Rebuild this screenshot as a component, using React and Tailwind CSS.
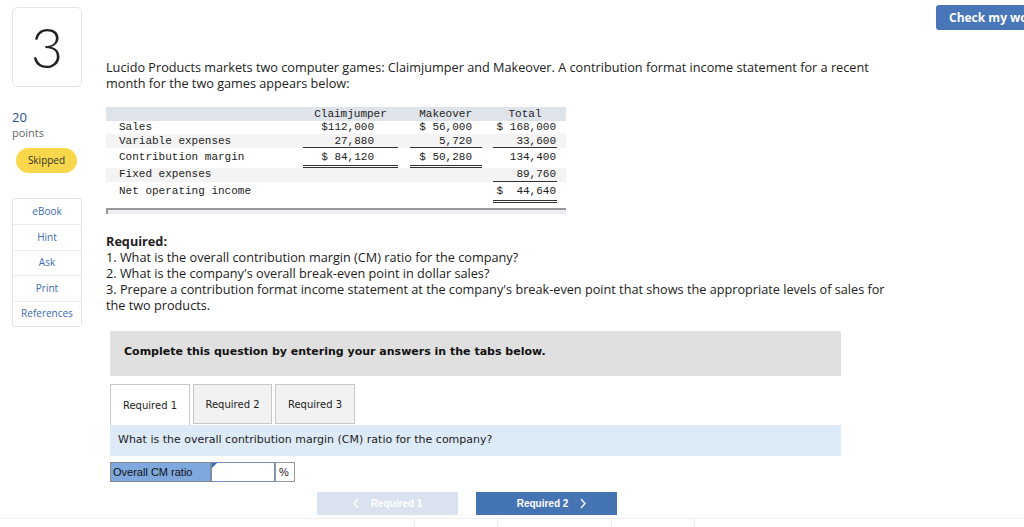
import React from "react";

const sideLinks = ["eBook", "Hint", "Ask", "Print", "References"];

const rows = [
  { label: "Sales", a: "$112,000", b: "$ 56,000", t: "$ 168,000", h: "h-[13px]", pt: "pt-[0px]", bg: "" },
  { label: "Variable expenses", a: "27,880", b: "5,720", t: "33,600", h: "h-[14px]", pt: "pt-[1px]", bg: "bg-[#f4f4f4]", lineA: "single", lineT: "single" },
  { label: "Contribution margin", a: "$ 84,120", b: "$ 50,280", t: "134,400", h: "h-[20px]", pt: "pt-[3px]", bg: "", lineA: "double" },
  { label: "Fixed expenses", a: "", b: "", t: "89,760", h: "h-[14px]", pt: "pt-[0px]", bg: "bg-[#f4f4f4]", lineT: "single" },
  { label: "Net operating income", a: "", b: "", t: "$  44,640", h: "h-[21px]", pt: "pt-[3px]", bg: "", lineT: "double" },
];

const lineCls = (kind) =>
  kind === "single"
    ? "border-b border-[#333]"
    : kind === "double"
    ? "border-b-[3px] border-double border-[#333]"
    : "";

const Chevron = ({ dir }) => (
  <svg width="6" height="11" viewBox="0 0 6 11" fill="none" stroke="currentColor" strokeWidth="1.3">
    {dir === "left" ? <path d="M5 1 L1 5.5 L5 10" /> : <path d="M1 1 L5 5.5 L1 10" />}
  </svg>
);

const Statement = () => (
  <div className="w-[460px] font-['Liberation_Mono',monospace] text-[11px] text-[#222]">
    <div className="flex h-[14px] bg-[#dfe3ea] items-end leading-[13px]">
      <div className="w-[197px]" />
      <div className="w-[95px] text-center">Claimjumper</div>
      <div className="w-[12px]" />
      <div className="w-[72px] text-right pr-[10px]">Makeover</div>
      <div className="w-[11px]" />
      <div className="w-[64px] text-center">Total</div>
    </div>
    {rows.map((r) => (
      <div key={r.label} className={`flex ${r.h} ${r.bg} leading-[12px]`}>
        <div className={`w-[197px] pl-[13px] ${r.pt}`}>{r.label}</div>
        <div className={`w-[95px] text-right pr-[24px] ${r.pt} ${lineCls(r.lineA)}`}>{r.a}</div>
        <div className="w-[12px]" />
        <div className={`w-[72px] text-right pr-[10px] ${r.pt} ${lineCls(r.lineA)}`}>{r.b}</div>
        <div className="w-[11px]" />
        <div className={`w-[64px] text-right whitespace-pre pr-[1px] ${r.pt} ${lineCls(r.lineT)}`}>{r.t}</div>
      </div>
    ))}
    <div className="mt-[5px] h-[6px] border-t-2 border-l-2 border-[#999] bg-[#eceef1]" />
  </div>
);

export default function App() {
  return (
    <div className="relative w-[1024px] h-[527px] overflow-hidden bg-white font-['Open_Sans',sans-serif] text-[#222]">
      <div className="flex">
        {/* left rail */}
        <div className="w-[94px] shrink-0 pl-[12px] pt-[7px]">
          <div className="w-[70px] h-[80px] border border-[#e4e4e4] rounded-[5px] flex items-center justify-center font-['Lato',sans-serif] text-[56px] font-light text-[#222] leading-none">
            3
          </div>
          <div className="mt-[23px] text-[13px] leading-[15px] text-[#1d4f91]">20</div>
          <div className="text-[11px] leading-[15px] text-[#666]">points</div>
          <div className="ml-[4px] mt-[8px] w-[61px] h-[25px] rounded-full bg-[#f8d84a] flex items-center justify-center text-[10px] text-[#333]">
            Skipped
          </div>
          <div className="mt-[25px] w-[70px] border border-[#e4e4e4] rounded-[3px]">
            {sideLinks.map((l, i) => (
              <div
                key={l}
                className={`h-[25.4px] flex items-center justify-center text-[10px] text-[#3b6cb3] ${i ? "border-t border-[#ececec]" : ""}`}
              >
                {l}
              </div>
            ))}
          </div>
        </div>

        {/* main */}
        <div className="flex-1 pl-[12px]">
          <div className="flex justify-end h-[59px] pt-[5px]">
            <button className="h-[25px] w-[110px] mr-[-22px] rounded-[3px] bg-[#4876b9] text-left pl-[13px] text-[12px] font-bold text-white whitespace-nowrap overflow-hidden">
              Check my work
            </button>
          </div>

          <p className="w-[794px] text-[12.7px] leading-[16px]">
            Lucido Products markets two computer games: Claimjumper and Makeover. A contribution format income statement
            for a recent month for the two games appears below:
          </p>

          <div className="mt-[16px]">
            <Statement />
          </div>

          <div className="mt-[19px] w-[794px] text-[12.7px] leading-[16px]">
            <div className="font-bold">Required:</div>
            <div>1. What is the overall contribution margin (CM) ratio for the company?</div>
            <div>2. What is the company's overall break-even point in dollar sales?</div>
            <div>
              3. Prepare a contribution format income statement at the company's break-even point that shows the
              appropriate levels of sales for the two products.
            </div>
          </div>

          <div className="ml-[4px] mt-[18px] w-[731px]">
            <div className="h-[45px] bg-[#e0e0e0] flex items-center pl-[14px] pb-[3px] font-['DejaVu_Sans',sans-serif] text-[11px] font-bold text-[#111]">
              Complete this question by entering your answers in the tabs below.
            </div>

            <div className="mt-[8px] flex gap-[3px] font-['DejaVu_Sans',sans-serif] text-[10px] text-[#222]">
              <div className="w-[80px] h-[41px] border border-b-0 border-[#c8c8c8] bg-white flex items-center justify-center">
                Required 1
              </div>
              <div className="w-[79px] h-[40px] border border-[#c8c8c8] bg-[#f2f2f2] flex items-center justify-center">
                Required 2
              </div>
              <div className="w-[80px] h-[40px] border border-[#c8c8c8] bg-[#f2f2f2] flex items-center justify-center">
                Required 3
              </div>
            </div>

            <div className="h-[31px] bg-[#ddeaf7] flex items-center pl-[8px] font-['DejaVu_Sans',sans-serif] text-[11px] text-[#222]">
              What is the overall contribution margin (CM) ratio for the company?
            </div>

            <div className="mt-[6px] flex h-[20px] font-['Liberation_Sans',sans-serif] text-[11px]">
              <div className="w-[101px] bg-[#7fa8de] border border-[#888] flex items-center pl-[2px] text-[#111]">
                Overall CM ratio
              </div>
              <div className="relative w-[64px] bg-white border border-[#6f8fbf]">
                <span className="absolute left-0 top-0 w-0 h-0 border-t-[5px] border-r-[5px] border-t-[#3b6cb3] border-r-transparent" />
              </div>
              <div className="w-[20px] border border-[#999] bg-white flex items-center pl-[3px] text-[#222]">%</div>
            </div>

            <div className="mt-[10px] flex gap-[18px] pl-[207px] font-['Liberation_Sans',sans-serif] text-[10px] font-bold text-white">
              <div className="w-[141px] h-[23px] bg-[#d9e2ee] flex items-center justify-center gap-[12px]">
                <Chevron dir="left" />
                <span>Required 1</span>
              </div>
              <div className="w-[141px] h-[23px] bg-[#4574b4] flex items-center justify-center gap-[12px]">
                <span className="pl-[10px]">Required 2</span>
                <Chevron dir="right" />
              </div>
            </div>
          </div>
        </div>
      </div>

      <div className="absolute left-0 right-0 top-[518px] border-t border-[#ededed] h-[9px] flex">
        <div className="ml-[414px] w-px h-full bg-[#eee]" />
        <div className="ml-[82px] w-px h-full bg-[#eee]" />
        <div className="ml-[113px] w-px h-full bg-[#eee]" />
        <div className="ml-[82px] w-px h-full bg-[#eee]" />
      </div>
    </div>
  );
}
